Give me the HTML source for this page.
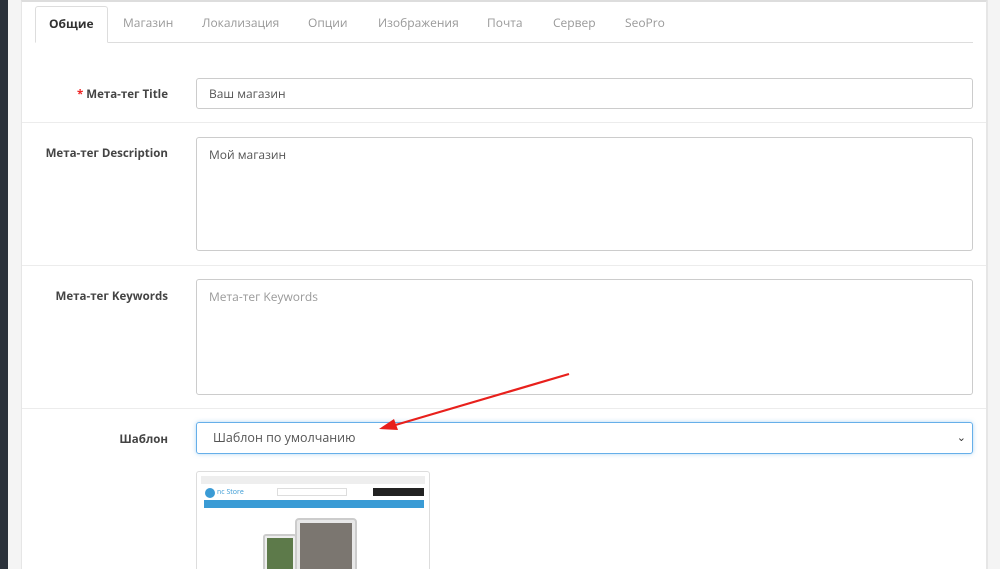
<!DOCTYPE html>
<html style="width:1000px;height:569px;overflow:hidden"><head><meta charset="utf-8"><style>
*{box-sizing:border-box;margin:0;padding:0}
body{width:1000px;height:569px;overflow:hidden;background:#f4f4f4;font-family:"Open Sans","Liberation Sans","DejaVu Sans",sans-serif;font-size:12px;color:#555;position:relative}
.dark{position:absolute;left:0;top:0;width:8px;height:569px;background:#2b323b}
.panel{position:absolute;left:21px;top:0;width:966px;height:569px;overflow:hidden;background:#fff;border-left:1px solid #e6e6e6;border-right:1px solid #e6e6e6;border-top:2px solid #ddd}
.tabs{position:absolute;left:13px;top:4px;width:938px;height:37px;border-bottom:1px solid #ddd;font-size:12px}
.tab{position:absolute;top:0;height:37px;line-height:34px;color:#999}
.tab.act{border:1px solid #ddd;border-bottom:1px solid #fff;background:#fff;color:#333;font-weight:bold;padding:0 13px;border-radius:3px 3px 0 0}
.sep{position:absolute;left:0;width:964px;height:1px;background:#ececec}
.lbl{position:absolute;right:818px;font-weight:bold;color:#444;font-size:11.5px;text-align:right;white-space:nowrap}
.inp{position:absolute;left:174px;width:777px;border:1px solid #ccc;border-radius:3px;padding:0 12px;font-size:12px;color:#555}
</style></head><body>
<div class="dark"></div>
<div class="panel">
<div class="tabs">
<div class="tab act" style="left:0">Общие</div>
<div class="tab" style="left:88px">Магазин</div>
<div class="tab" style="left:167px">Локализация</div>
<div class="tab" style="left:273px">Опции</div>
<div class="tab" style="left:343px">Изображения</div>
<div class="tab" style="left:452px">Почта</div>
<div class="tab" style="left:518px">Сервер</div>
<div class="tab" style="left:590px">SeoPro</div>
</div>
<div class="lbl" style="top:85px"><span style="color:#e22">*</span> Мета-тег Title</div>
<div class="inp" style="top:76px;height:31px;line-height:29px">Ваш магазин</div>
<div class="sep" style="top:120px"></div>
<div class="lbl" style="top:144px">Мета-тег Description</div>
<div class="inp" style="top:135px;height:114px;padding-top:8px">Мой магазин</div>
<div class="sep" style="top:263px"></div>
<div class="lbl" style="top:287px">Мета-тег Keywords</div>
<div class="inp" style="top:277px;height:116px;padding-top:8px;color:#999">Мета-тег Keywords</div>
<div class="sep" style="top:406px"></div>
<div class="lbl" style="top:430px">Шаблон</div>
<div class="inp" style="top:420px;height:32px;line-height:30px;border-color:#66afe9;box-shadow:0 0 4px rgba(102,175,233,.5);padding-left:16px;font-size:12.5px">Шаблон по умолчанию<span style="position:absolute;right:6px;top:0;color:#333;font-size:11px">&#8964;</span></div>
<div style="position:absolute;left:174px;top:469px;width:234px;height:110px;border:1px solid #ddd;border-radius:3px;background:#fff;overflow:hidden">
 <div style="position:absolute;left:4px;top:4px;width:224px;height:8px;background:#eee"></div>
 <div style="position:absolute;left:8px;top:16px;width:10px;height:10px;border-radius:50%;background:#3a9bd5"></div>
 <div style="position:absolute;left:20px;top:16px;font-size:7px;color:#3a9bd5">nc Store</div>
 <div style="position:absolute;left:80px;top:16px;width:70px;height:8px;border:1px solid #ddd"></div>
 <div style="position:absolute;left:176px;top:16px;width:51px;height:8px;background:#222"></div>
 <div style="position:absolute;left:7px;top:28px;width:220px;height:8px;background:#3a9bd5"></div>
 <div style="position:absolute;left:98px;top:46px;width:62px;height:60px;background:#e8e8e8;border:2px solid #ccc;border-radius:4px"><div style="margin:3px;height:48px;background:#7b7670"></div></div>
 <div style="position:absolute;left:66px;top:62px;width:34px;height:40px;background:#eee;border:2px solid #ccc;border-radius:3px"><div style="margin:2px;height:32px;background:#5d7a4a"></div></div>
</div>
</div>
<div style="position:absolute;left:987px;top:0;width:13px;height:569px;background:#f4f4f4;border-left:1px solid #e6e6e6"></div>
<svg style="position:absolute;left:0;top:0" width="1000" height="569">
<line x1="569" y1="374" x2="392" y2="426" stroke="#e8201c" stroke-width="2.2"/>
<polygon points="379,429 394,419 398,430" fill="#e8201c"/>
</svg>
</body></html>
